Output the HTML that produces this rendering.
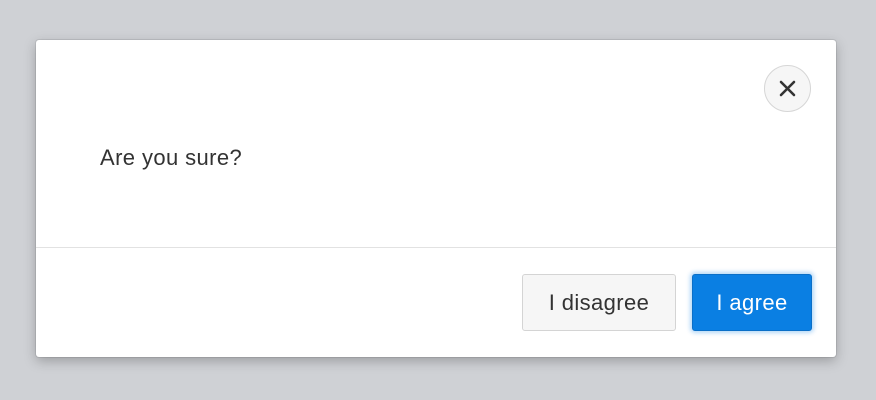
<!DOCTYPE html>
<html><head><style>
body{margin:0;width:876px;height:400px;background:#cfd1d5;font-family:"Liberation Sans",sans-serif;position:relative;overflow:hidden}
.m{position:absolute;left:36px;top:40px;width:800px;height:317px;background:#fff;border-radius:3px;box-shadow:0 4px 12px rgba(0,0,0,.25),0 0 0 1px rgba(0,0,0,.08)}
.x{position:absolute;left:728px;top:25px;width:45px;height:45px;border-radius:50%;background:#f6f6f6;border:1px solid #d6d6d6}
.t{position:absolute;left:64px;top:105px;font-size:22px;letter-spacing:0.4px;color:#333}
.hr{position:absolute;left:0;right:0;top:207px;border-top:1px solid #e2e2e2}
.b{position:absolute;top:234px;height:57px;box-sizing:border-box;border-radius:3px;font-size:22px;letter-spacing:0.4px;text-align:center;line-height:56px}
.b1{left:486px;width:154px;background:#f6f6f6;border:1px solid #d4d4d4;color:#333}
.b2{left:656px;width:120px;background:#0a7fe3;border:1px solid #0a6fc8;color:#fff;box-shadow:0 0 4px 2px rgba(10,127,227,.3)}
</style></head><body>
<div class="m">
<div class="x"><svg width="45" height="45" viewBox="0 0 45 45"><path d="M16 16L29 29M29 16L16 29" stroke="#333" stroke-width="2.6" stroke-linecap="round"/></svg></div>
<div class="t">Are you sure?</div>
<div class="hr"></div>
<div class="b b1">I disagree</div>
<div class="b b2">I agree</div>
</div>
</body></html>
